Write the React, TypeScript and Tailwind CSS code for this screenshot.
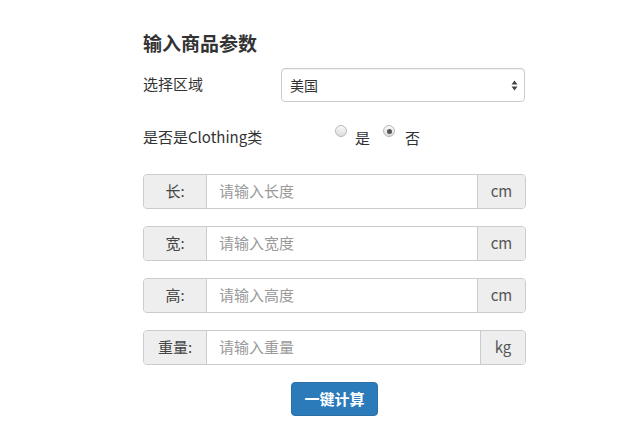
import React from "react";

const fields = [
  { label: "长:", placeholder: "请输入长度", unit: "cm" },
  { label: "宽:", placeholder: "请输入宽度", unit: "cm" },
  { label: "高:", placeholder: "请输入高度", unit: "cm" },
  { label: "重量:", placeholder: "请输入重量", unit: "kg" },
];

const Radio = ({ checked }: { checked?: boolean }) => (
  <span className="relative -top-[6px] inline-flex items-center justify-center w-[12px] h-[12px] rounded-full border border-[#b8b8b8] bg-gradient-to-b from-[#fafafa] to-[#dcdcdc]">
    {checked && <span className="w-[5px] h-[5px] rounded-full bg-[#555]" />}
  </span>
);

const App = () => {
  return (
    <div
      className="w-[640px] h-[436px] bg-white text-[#333] overflow-hidden"
      style={{ fontFamily: '"Noto Sans CJK SC", "Noto Sans", sans-serif' }}
    >
      <div className="ml-[143px] w-[383px] flex flex-col">
        <h1 className="mt-[31px] h-[24px] leading-[24px] text-[19px] font-bold">输入商品参数</h1>

        <div className="mt-[13px] flex items-center h-[34px]">
          <span className="w-[138px] text-[15px] leading-[20px] -mt-[2px]">选择区域</span>
          <div className="relative w-[244px] h-[34px] border border-[#ccc] rounded-[4px] flex items-center pl-[8px] text-[14px] text-[#333] shadow-[inset_0_1px_1px_rgba(0,0,0,0.06)]">
            美国
            <svg className="absolute right-[6px] top-[11px]" width="7" height="11" viewBox="0 0 7 11">
              <path d="M3.5 0.5 L6.5 4.5 H0.5 Z" fill="#444" />
              <path d="M3.5 10.5 L6.5 6.5 H0.5 Z" fill="#444" />
            </svg>
          </div>
        </div>

        <div className="mt-[25px] h-[20px] flex items-center text-[15px] leading-[20px]">
          <span className="w-[192px]">是否是Clothing类</span>
          <span className="flex items-center">
            <Radio />
            <span className="ml-[8px] mt-[2px]">是</span>
          </span>
          <span className="flex items-center ml-[13px]">
            <Radio checked />
            <span className="ml-[10px] mt-[2px]">否</span>
          </span>
        </div>

        <div className="mt-[27px] flex flex-col gap-[17px]">
          {fields.map((f, i) => (
            <div key={i} className="flex h-[35px] text-[15px] rounded-[4px] border border-[#ccc] overflow-hidden">
              <span className="w-[63px] flex items-center justify-center bg-[#eee] border-r border-[#ccc] text-[#444]">
                {f.label}
              </span>
              <input
                className="flex-1 min-w-0 px-[12px] outline-none text-[15px] placeholder:text-[#9a9a9a] bg-white"
                placeholder={f.placeholder}
                style={{ fontFamily: '"Noto Sans CJK SC", "Noto Sans", sans-serif' }}
              />
              <span
                className={`${f.unit === "kg" ? "w-[45px]" : "w-[48px]"} flex items-center justify-center bg-[#eee] border-l border-[#ccc] text-[#555]`}
              >
                {f.unit}
              </span>
            </div>
          ))}
        </div>

        <div className="mt-[17px] flex justify-center">
          <button className="w-[87px] h-[34px] rounded-[4px] bg-[#2b7bba] border border-[#2a6fa6] text-white text-[15px] font-bold">
            一键计算
          </button>
        </div>
      </div>
    </div>
  );
};

export default App;
